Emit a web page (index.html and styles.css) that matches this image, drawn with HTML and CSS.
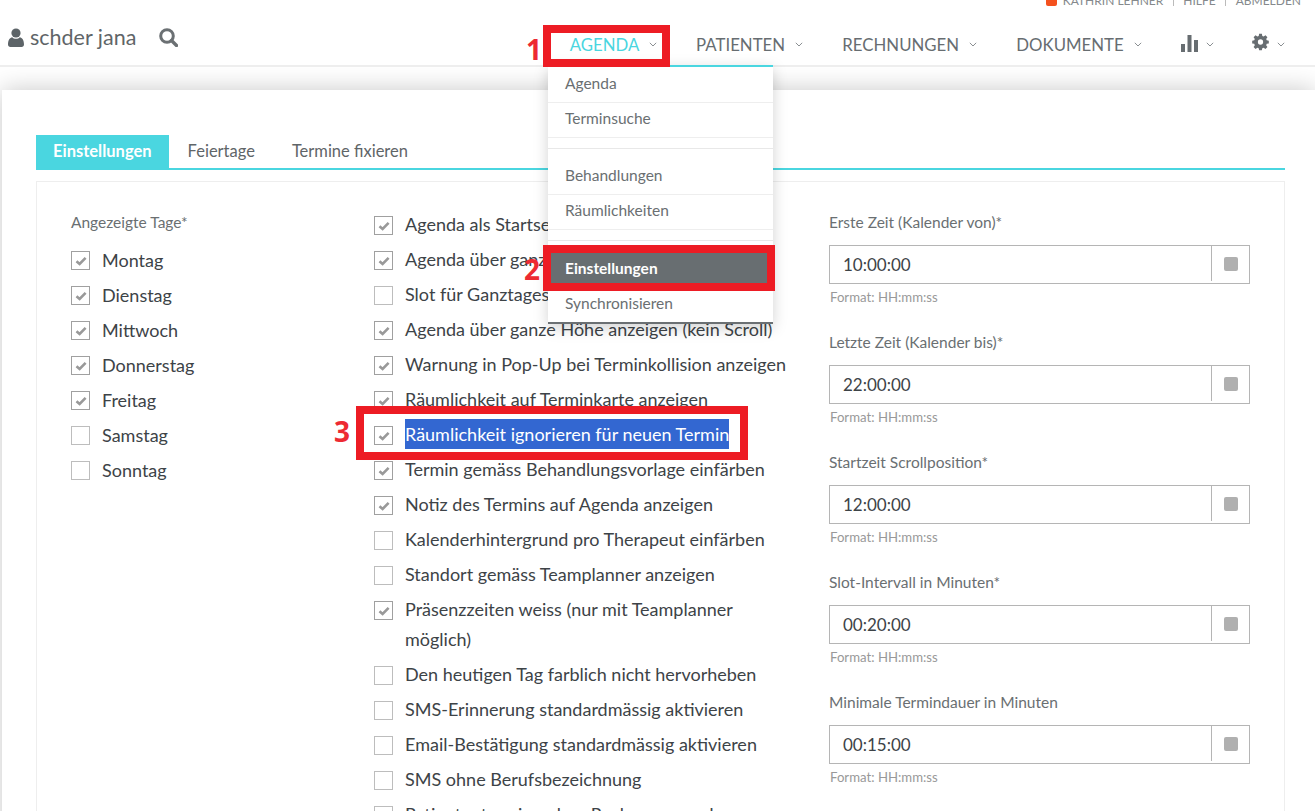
FILE: index.html
```html
<!DOCTYPE html>
<html lang="de">
<head>
  <meta charset="UTF-8">
  <title>Einstellungen</title>
  <link rel="stylesheet" href="styles.css">
</head>
<body>
  <svg class="defs" width="0" height="0">
    <symbol id="check" viewBox="0 0 12 10"><path d="M1.5 5.2 4.6 8 10.6 1.8" fill="none" stroke="#999" stroke-width="2.6"/></symbol>
    <symbol id="chev" viewBox="0 0 8 5"><path d="M.8.8 4 4 7.2.8" fill="none" stroke="#8a8f92" stroke-width="1"/></symbol>
  </svg>

  <header class="header">
    <div class="topbar">
      <span class="status-dot"></span>
      <a class="top-link">KATHRIN LEHNER</a>
      <span class="top-sep"></span>
      <a class="top-link">HILFE</a>
      <span class="top-sep"></span>
      <a class="top-link">ABMELDEN</a>
    </div>
    <div class="mainbar">
      <div class="user">
        <svg class="user-icon" viewBox="0 0 16 19"><circle cx="8" cy="5" r="4.6" fill="#5d6468"/><path d="M0 16.500C0 12 2 9.600 4.200 9.200 5.200 10.200 6.500 10.700 8 10.700S10.800 10.200 11.800 9.200C14 9.600 16 12 16 16.500 16 18 15 19 13.600 19H2.400C1 19 0 18 0 16.500Z" fill="#5d6468"/></svg>
        <span class="user-name">schder jana</span>
        <svg class="search-icon" viewBox="0 0 19 19"><circle cx="8" cy="8" r="6.300" fill="none" stroke="#6b7073" stroke-width="3"/><path d="M12.500 12.500 17.500 17.500" stroke="#6b7073" stroke-width="3.400" stroke-linecap="round"/></svg>
      </div>
      <nav class="nav">
        <a class="nav-item active">AGENDA <svg class="chev"><use href="#chev"/></svg></a>
        <a class="nav-item">PATIENTEN <svg class="chev"><use href="#chev"/></svg></a>
        <a class="nav-item">RECHNUNGEN <svg class="chev"><use href="#chev"/></svg></a>
        <a class="nav-item">DOKUMENTE <svg class="chev"><use href="#chev"/></svg></a>
        <a class="nav-item nav-icon">
          <svg class="chart-icon" viewBox="0 0 17 17"><path d="M0 9h4v8H0zM6.500 0h4v17h-4zM13 5h4v12h-4z" fill="#676d71"/></svg>
          <svg class="chev"><use href="#chev"/></svg>
        </a>
        <a class="nav-item nav-icon gear-item">
          <svg class="gear-icon" viewBox="0 0 24 26"><path d="M10 1h4l.6 3.200 1.900.8L19.200 3.200 22 6l-1.800 2.700.8 1.900 3 .5v4l-3 .6-.8 1.900L22 20.200 19.200 23l-2.700-1.800-1.900.8L14 25h-4l-.6-3-1.900-.8L4.800 23 2 20.200l1.800-2.600-.8-1.900-3-.6v-4l3-.5.8-1.900L2 6l2.800-2.800L7.500 5l1.900-.8Z" fill="#676d71"/><circle cx="12" cy="13" r="3.800" fill="#fff"/></svg>
          <svg class="chev"><use href="#chev"/></svg>
        </a>
      </nav>
    </div>
  </header>

  <main class="card">
    <div class="tabs">
      <a class="tab active">Einstellungen</a>
      <a class="tab">Feiertage</a>
      <a class="tab">Termine fixieren</a>
    </div>
    <div class="panel">
      <section class="col-days">
        <div class="field-label">Angezeigte Tage*</div>
        <div class="check-row"><span class="box on"><svg><use href="#check"/></svg></span>Montag</div>
        <div class="check-row"><span class="box on"><svg><use href="#check"/></svg></span>Dienstag</div>
        <div class="check-row"><span class="box on"><svg><use href="#check"/></svg></span>Mittwoch</div>
        <div class="check-row"><span class="box on"><svg><use href="#check"/></svg></span>Donnerstag</div>
        <div class="check-row"><span class="box on"><svg><use href="#check"/></svg></span>Freitag</div>
        <div class="check-row"><span class="box"></span>Samstag</div>
        <div class="check-row"><span class="box"></span>Sonntag</div>
      </section>

      <section class="col-options">
        <div class="check-row"><span class="box on"><svg><use href="#check"/></svg></span><span>Agenda als Startseite anzeigen</span></div>
        <div class="check-row"><span class="box on"><svg><use href="#check"/></svg></span><span>Agenda über ganze Breite anzeigen</span></div>
        <div class="check-row"><span class="box"></span><span>Slot für Ganztagestermine anzeigen</span></div>
        <div class="check-row"><span class="box on"><svg><use href="#check"/></svg></span><span>Agenda über ganze Höhe anzeigen (kein Scroll)</span></div>
        <div class="check-row"><span class="box on"><svg><use href="#check"/></svg></span><span>Warnung in Pop-Up bei Terminkollision anzeigen</span></div>
        <div class="check-row"><span class="box on"><svg><use href="#check"/></svg></span><span>Räumlichkeit auf Terminkarte anzeigen</span></div>
        <div class="check-row"><span class="box on"><svg><use href="#check"/></svg></span><span class="selected">Räumlichkeit ignorieren für neuen Termin</span></div>
        <div class="check-row"><span class="box on"><svg><use href="#check"/></svg></span><span>Termin gemäss Behandlungsvorlage einfärben</span></div>
        <div class="check-row"><span class="box on"><svg><use href="#check"/></svg></span><span>Notiz des Termins auf Agenda anzeigen</span></div>
        <div class="check-row"><span class="box"></span><span>Kalenderhintergrund pro Therapeut einfärben</span></div>
        <div class="check-row"><span class="box"></span><span>Standort gemäss Teamplanner anzeigen</span></div>
        <div class="check-row"><span class="box on"><svg><use href="#check"/></svg></span><span>Präsenzzeiten weiss (nur mit Teamplanner möglich)</span></div>
        <div class="check-row"><span class="box"></span><span>Den heutigen Tag farblich nicht hervorheben</span></div>
        <div class="check-row"><span class="box"></span><span>SMS-Erinnerung standardmässig aktivieren</span></div>
        <div class="check-row"><span class="box"></span><span>Email-Bestätigung standardmässig aktivieren</span></div>
        <div class="check-row"><span class="box"></span><span>SMS ohne Berufsbezeichnung</span></div>
        <div class="check-row"><span class="box"></span><span>Patiententermine ohne Rechnungen oder</span></div>
      </section>

      <section class="col-times">
        <div class="time-group">
          <div class="field-label">Erste Zeit (Kalender von)*</div>
          <div class="time-input"><span class="time-value">10:00:00</span><span class="time-addon"><i></i></span></div>
          <div class="hint">Format: HH:mm:ss</div>
        </div>
        <div class="time-group">
          <div class="field-label">Letzte Zeit (Kalender bis)*</div>
          <div class="time-input"><span class="time-value">22:00:00</span><span class="time-addon"><i></i></span></div>
          <div class="hint">Format: HH:mm:ss</div>
        </div>
        <div class="time-group">
          <div class="field-label">Startzeit Scrollposition*</div>
          <div class="time-input"><span class="time-value">12:00:00</span><span class="time-addon"><i></i></span></div>
          <div class="hint">Format: HH:mm:ss</div>
        </div>
        <div class="time-group">
          <div class="field-label">Slot-Intervall in Minuten*</div>
          <div class="time-input"><span class="time-value">00:20:00</span><span class="time-addon"><i></i></span></div>
          <div class="hint">Format: HH:mm:ss</div>
        </div>
        <div class="time-group">
          <div class="field-label">Minimale Termindauer in Minuten</div>
          <div class="time-input"><span class="time-value">00:15:00</span><span class="time-addon"><i></i></span></div>
          <div class="hint">Format: HH:mm:ss</div>
        </div>
      </section>
    </div>
  </main>

  <div class="dropdown">
    <a class="drop-item">Agenda</a>
    <a class="drop-item">Terminsuche</a>
    <div class="drop-gap"></div>
    <a class="drop-item">Behandlungen</a>
    <a class="drop-item">Räumlichkeiten</a>
    <div class="drop-gap"></div>
    <a class="drop-item current">Einstellungen</a>
    <a class="drop-item">Synchronisieren</a>
  </div>

  <div class="mark mark-1"></div>
  <div class="mark mark-2"></div>
  <div class="mark mark-3"></div>
  <span class="mark-num num-1">1</span>
  <span class="mark-num num-2">2</span>
  <span class="mark-num num-3">3</span>
</body>
</html>
```

FILE: styles.css
```css
* {
  margin: 0;
  padding: 0;
  box-sizing: border-box;
}

html,
body {
  height: 811px;
  overflow: hidden;
}

body {
  position: relative;
  background: #fff;
  font-family: 'Lato', sans-serif;
  color: #3d4347;
}

.defs {
  position: absolute;
}

/* header */
.header {
  display: flow-root;
  height: 67px;
  border-bottom: 2px solid #eeeeee;
  position: relative;
  z-index: 2;
  background: #fff;
}

.topbar {
  display: flex;
  align-items: center;
  justify-content: flex-end;
  height: 12px;
  margin-top: -6px;
  padding-right: 14px;
  font-size: 12px;
  color: #85898c;
}

.status-dot {
  width: 11px;
  height: 11px;
  margin-right: 6px;
  border-radius: 2px;
  background: #f4511e;
}

.top-sep {
  width: 1px;
  height: 12px;
  margin: 0 9.500px;
  background: #bbb;
}

.mainbar {
  display: flex;
  justify-content: space-between;
  height: 59px;
}

.user {
  display: flex;
  align-items: center;
  height: 62px;
  padding-left: 8px;
  font-size: 21.500px;
  color: #5f6568;
}

.user-icon {
  width: 16px;
  height: 19px;
  margin-right: 6px;
}

.search-icon {
  width: 19px;
  height: 19px;
  margin-left: 23px;
}

.nav {
  display: flex;
  height: 59px;
  padding-right: 30px;
}

.nav-item {
  display: flex;
  align-items: center;
  height: 59px;
  padding-top: 17px;
  margin-left: 39px;
  font-size: 16.800px;
  color: #676d71;
  white-space: pre;
}

.nav-item.active {
  color: #4ad6e0;
}

.nav-icon {
  margin-left: 39px;
}

.gear-item {
  margin-left: 38px;
}

.chev {
  width: 8px;
  height: 5px;
  margin-left: 6px;
  margin-top: 1px;
}

.nav-icon .chev {
  margin-left: 8px;
}

.chart-icon {
  width: 17px;
  height: 17px;
  margin-top: -2px;
}

.gear-icon {
  width: 17px;
  height: 18px;
  margin-top: -4px;
}

/* page card */
.card {
  height: 760px;
  margin: 23px 0 0 2px;
  padding: 45px 30px 0 34px;
  background: #fff;
  box-shadow: 0 0 24px rgba(0, 0, 0, 0.22);
}

.tabs {
  display: flex;
  height: 35px;
  border-bottom: 2px solid #4ad6e0;
}

.tab {
  height: 33px;
  padding: 0 18px 0 19px;
  line-height: 33px;
  font-size: 16.500px;
  color: #5f6568;
}

.tab.active {
  padding: 0 17px;
  font-weight: 700;
  background: #4ad6e0;
  color: #fff;
}

.panel {
  display: flex;
  height: 700px;
  margin-top: 11px;
  padding: 26px 0 0 34px;
  border: 1px solid #eeeeee;
}

.col-days {
  width: 303px;
  flex: none;
}

.col-days .field-label {
  margin: 1px 0 10px;
}

.col-options {
  width: 418px;
  flex: none;
  padding-top: 1px;
}

.col-options .box {
  margin-top: 7px;
}

.col-times {
  width: 421px;
  flex: none;
  margin-left: 37px;
  padding-top: 1px;
}

.field-label {
  height: 26px;
  line-height: 26px;
  font-size: 15.500px;
  color: #6a6f72;
}

.check-row {
  display: flex;
  padding-bottom: 5px;
  line-height: 30px;
  font-size: 18px;
  color: #3d4347;
}

.box {
  flex: none;
  width: 19px;
  height: 19px;
  margin: 6px 12px 0 0;
  border: 1px solid #bdbdbd;
}

.box.on {
  border-color: #a0a0a0;
}

.box svg {
  display: block;
  width: 12px;
  height: 10px;
  margin: 4px 0 0 3px;
}

.selected {
  background: #3367d1;
  color: #fff;
}

.time-group {
  height: 120px;
}

.time-input {
  display: flex;
  height: 39px;
  margin-top: 10px;
  border: 1px solid #b5b5b5;
}

.time-value {
  flex: 1;
  padding-left: 13px;
  line-height: 37px;
  font-size: 17px;
  color: #3d4347;
}

.time-addon {
  display: flex;
  align-items: center;
  justify-content: center;
  width: 38px;
  height: 35px;
  border-left: 1px solid #b5b5b5;
}

.time-addon i {
  width: 14px;
  height: 14px;
  border-radius: 2px;
  background: #b0b0b0;
}

.hint {
  margin: 5px 0 0 1px;
  font-size: 13.200px;
  color: #999;
}

/* open agenda menu */
.dropdown {
  position: absolute;
  z-index: 3;
  left: 548px;
  top: 65px;
  width: 225px;
  height: 259px;
  padding-top: 1px;
  border-top: 2px solid #4ad6e0;
  border-bottom: 2px solid #6b7073;
  background: #fff;
  box-shadow: 0 4px 14px rgba(0, 0, 0, 0.18);
}

.drop-item {
  display: block;
  height: 35px;
  padding-left: 17px;
  line-height: 31px;
  font-size: 15.500px;
  color: #6a6f72;
  border-bottom: 1px solid #eeeeee;
}

.drop-item:last-child {
  height: 34px;
  border-bottom: 0;
}

.drop-gap {
  height: 22px;
  background: linear-gradient(#fff 10px, #e8e8e8 10px, #e8e8e8 11px, #fff 11px);
}

.drop-item.current {
  height: 36px;
  font-weight: 700;
  line-height: 32px;
  background: #686e71;
  color: #fff;
  border: 0;
}

/* red annotations drawn over the screenshot */
.mark {
  position: absolute;
  z-index: 4;
  border: 8px solid #ed1c24;
}

.mark-1 {
  left: 543px;
  top: 25px;
  width: 127px;
  height: 42px;
}

.mark-2 {
  left: 543px;
  top: 245px;
  width: 232px;
  height: 46px;
}

.mark-3 {
  left: 356px;
  top: 406px;
  width: 392px;
  height: 54px;
}

.mark-num {
  position: absolute;
  z-index: 4;
  font-family: 'Open Sans', sans-serif;
  font-size: 28px;
  font-weight: 700;
  line-height: 30px;
  color: #ed2a32;
}

.num-1 {
  left: 526px;
  top: 34px;
}

.num-2 {
  left: 524px;
  top: 254px;
}

.num-3 {
  left: 334px;
  top: 416px;
}
```
